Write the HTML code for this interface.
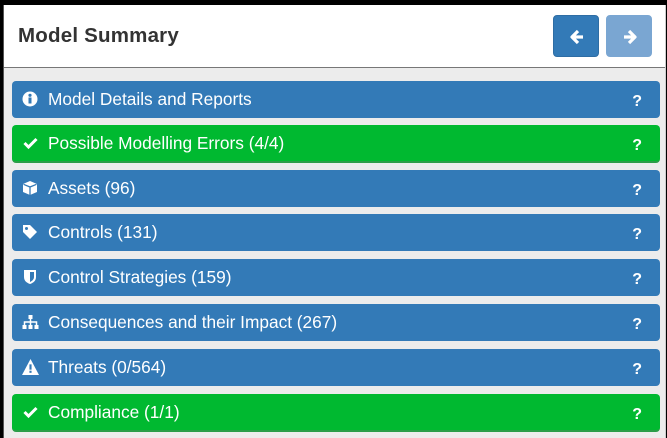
<!DOCTYPE html>
<html><head><style>
body{margin:0;width:667px;height:438px;overflow:hidden;background:#000;font-family:"Liberation Sans",sans-serif;position:relative}
.panel{position:absolute;left:3px;top:5px;width:661px;height:433px;background:#ececec;border-left:1px solid #555;border-right:1px solid #ccc}
.hdr{position:absolute;left:0;top:0;width:661px;height:62px;background:#fff;border-bottom:1px solid #777}
.hdr h1{position:absolute;left:14px;top:19px;margin:0;font-size:20.5px;font-weight:bold;color:#333;letter-spacing:0.2px}
.btn{position:absolute;top:10px;width:46px;height:42px;border-radius:4px;background:#337ab7;border:1px solid #2e6da4;box-sizing:border-box}
.btn svg{position:absolute;left:15px;top:13px}
.bar{position:absolute;left:8px;width:648px;height:37px;border-radius:4px;background:#337ab7;color:#fff;font-size:17.3px;line-height:37px}
.bar.g{background:#00b930;border-bottom:2px solid #2a9d48;height:36px}
.bar .t{position:absolute;left:36px}
.bar .q{position:absolute;right:18px;font-weight:bold;font-size:16px;top:2px}
.bar svg{position:absolute;left:10px;top:10px}
</style></head><body>
<div class="panel">
<div class="hdr"><h1>Model Summary</h1>
<div class="btn" style="left:549px"><svg width="16" height="16" viewBox="0 0 16 16"><path d="M9 2L3 8l6 6M3 8h11" stroke="#fff" stroke-width="3.2" fill="none" stroke-linejoin="round"/></svg></div>
<div class="btn" style="left:602px;background:#7aa6d2;border-color:#7aa6d2"><svg width="16" height="16" viewBox="0 0 16 16"><path d="M7 2l6 6-6 6M13 8H2" stroke="#fff" stroke-width="3.2" fill="none" stroke-linejoin="round"/></svg></div>
</div>
<div class="bar" style="top:76px"><svg width="16" height="16" viewBox="0 0 16 16"><circle cx="8" cy="8" r="7.5" fill="#fff"/><rect x="6.5" y="6.5" width="3" height="6" fill="#337ab7"/><circle cx="8" cy="4.3" r="1.6" fill="#337ab7"/></svg><span class="t">Model Details and Reports</span><span class="q">?</span></div>
<div class="bar g" style="top:120px"><svg width="17" height="16" viewBox="0 0 16 16"><path d="M2 8l4 4 8-8" stroke="#fff" stroke-width="3" fill="none"/></svg><span class="t">Possible Modelling Errors (4/4)</span><span class="q">?</span></div>
<div class="bar" style="top:165px"><svg width="16" height="16" viewBox="0 0 16 16"><path d="M8 1l7 3v8l-7 3-7-3V4z" fill="#fff"/><path d="M1.5 4.3L8 7l6.5-2.7M8 7v8" stroke="#337ab7" stroke-width="1.3" fill="none"/></svg><span class="t">Assets (96)</span><span class="q">?</span></div>
<div class="bar" style="top:209px"><svg width="16" height="16" viewBox="0 0 16 16"><path d="M1 1h7l7 7-7 7-7-7z" fill="#fff"/><circle cx="4.5" cy="4.5" r="1.5" fill="#337ab7"/></svg><span class="t">Controls (131)</span><span class="q">?</span></div>
<div class="bar" style="top:254px"><svg width="16" height="16" viewBox="0 0 16 16"><path d="M2 1h12v7c0 4-3 6-6 7-3-1-6-3-6-7z" fill="#fff"/><path d="M8 3h4v5c0 2.5-2 4-4 5z" fill="#337ab7"/></svg><span class="t">Control Strategies (159)</span><span class="q">?</span></div>
<div class="bar" style="top:299px"><svg width="17" height="16" viewBox="0 0 16 16"><rect x="6" y="1" width="4" height="4" fill="#fff"/><rect x="0" y="11" width="4" height="4" fill="#fff"/><rect x="6" y="11" width="4" height="4" fill="#fff"/><rect x="12" y="11" width="4" height="4" fill="#fff"/><path d="M8 5v6M2 11V8h12v3" stroke="#fff" stroke-width="1.5" fill="none"/></svg><span class="t">Consequences and their Impact (267)</span><span class="q">?</span></div>
<div class="bar" style="top:344px"><svg width="17" height="16" viewBox="0 0 16 15"><path d="M8 0l8 15H0z" fill="#fff"/><rect x="7" y="5" width="2" height="5" fill="#337ab7"/><rect x="7" y="11" width="2" height="2" fill="#337ab7"/></svg><span class="t">Threats (0/564)</span><span class="q">?</span></div>
<div class="bar g" style="top:389px"><svg width="17" height="16" viewBox="0 0 16 16"><path d="M2 8l4 4 8-8" stroke="#fff" stroke-width="3" fill="none"/></svg><span class="t">Compliance (1/1)</span><span class="q">?</span></div>
</div>
</body></html>
